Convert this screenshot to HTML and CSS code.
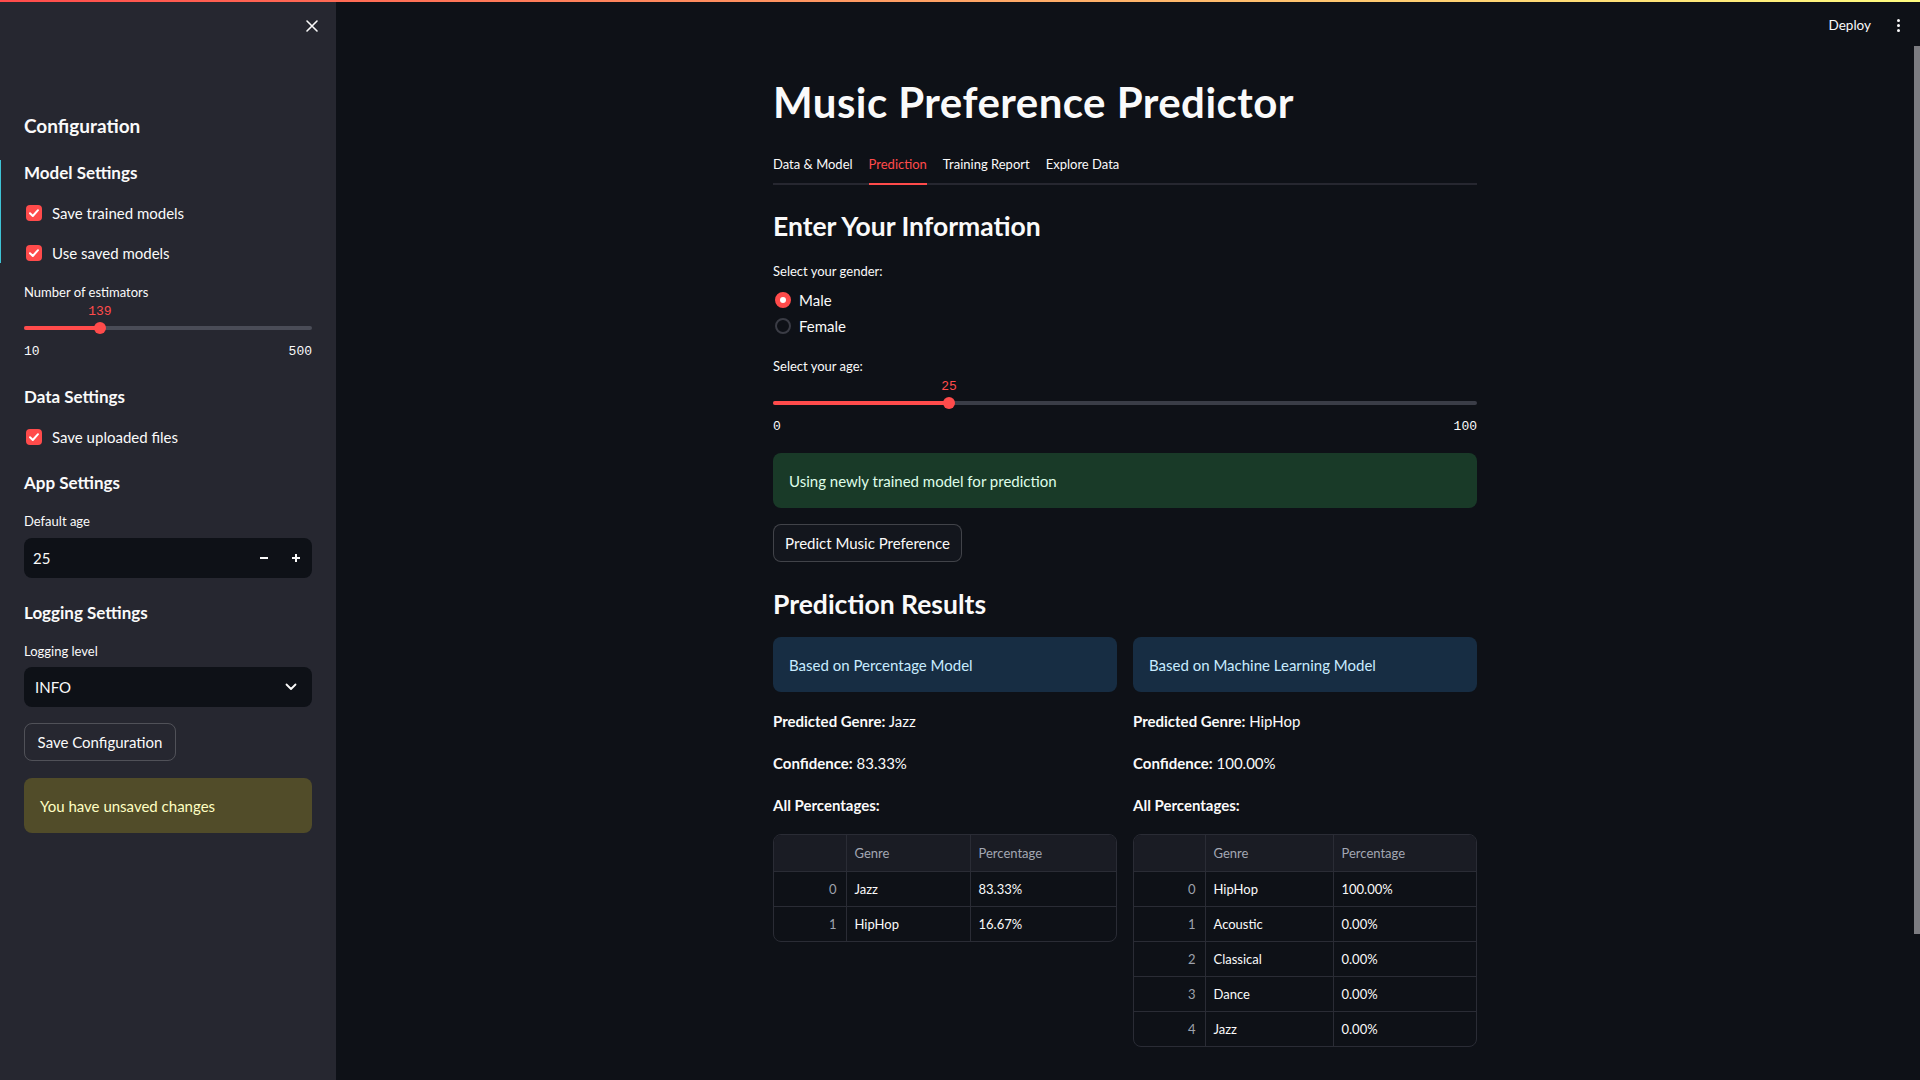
FILE: index.html
```html
<!DOCTYPE html>
<html lang="en">
<head>
<meta charset="utf-8">
<title>Music Preference Predictor</title>
<link rel="stylesheet" href="styles.css">
</head>
<body>
<div class="decoration"></div>
<div class="app">
  <aside class="sidebar">
    <div class="sb-edge"></div>
    <div class="sb-header">
      <button class="close-btn" aria-label="Close sidebar">
        <svg width="14" height="14" viewBox="0 0 14 14"><path d="M2 2 L12 12 M12 2 L2 12" stroke="#fafafa" stroke-width="1.6" stroke-linecap="round"/></svg>
      </button>
    </div>
    <div class="sb-content">
      <h2 class="sb-title">Configuration</h2>
      <h3 class="sb-sub sub-model">Model Settings</h3>
      <label class="checkbox cb-first"><span class="box"><svg width="12" height="12" viewBox="0 0 12 12"><path d="M2 6.2 L4.8 9 L10 3.2" fill="none" stroke="#fff" stroke-width="2" stroke-linecap="round" stroke-linejoin="round"/></svg></span><span>Save trained models</span></label>
      <label class="checkbox"><span class="box"><svg width="12" height="12" viewBox="0 0 12 12"><path d="M2 6.2 L4.8 9 L10 3.2" fill="none" stroke="#fff" stroke-width="2" stroke-linecap="round" stroke-linejoin="round"/></svg></span><span>Use saved models</span></label>
      <div class="widget-label lbl-est">Number of estimators</div>
      <div class="slider">
        <div class="slider-value-row"><span class="slider-value" style="left:26.33%">139</span></div>
        <div class="slider-track sb-track"><div class="rail"></div><div class="fill" style="width:26.33%"></div><div class="thumb" style="left:26.33%"></div></div>
        <div class="slider-ticks"><span>10</span><span>500</span></div>
      </div>
      <h3 class="sb-sub sub-data">Data Settings</h3>
      <label class="checkbox cb-data"><span class="box"><svg width="12" height="12" viewBox="0 0 12 12"><path d="M2 6.2 L4.8 9 L10 3.2" fill="none" stroke="#fff" stroke-width="2" stroke-linecap="round" stroke-linejoin="round"/></svg></span><span>Save uploaded files</span></label>
      <h3 class="sb-sub sub-app">App Settings</h3>
      <div class="widget-label lbl-age-default">Default age</div>
      <div class="number-input">
        <span class="num-value">25</span>
        <span class="step"><svg width="10" height="10" viewBox="0 0 10 10"><path d="M1 5 H9" stroke="#fafafa" stroke-width="2"/></svg></span>
        <span class="step"><svg width="10" height="10" viewBox="0 0 10 10"><path d="M1 5 H9 M5 1 V9" stroke="#fafafa" stroke-width="2"/></svg></span>
      </div>
      <h3 class="sb-sub sub-log">Logging Settings</h3>
      <div class="widget-label lbl-log">Logging level</div>
      <div class="select">
        <span>INFO</span>
        <svg width="12" height="8" viewBox="0 0 12 8"><path d="M1.5 1.5 L6 6 L10.5 1.5" fill="none" stroke="#fafafa" stroke-width="1.8" stroke-linecap="round" stroke-linejoin="round"/></svg>
      </div>
      <button class="btn btn-save">Save Configuration</button>
      <div class="alert warning">You have unsaved changes</div>
    </div>
  </aside>

  <main class="main">
    <div class="block">
      <h1 class="title">Music Preference Predictor</h1>
      <div class="tabs">
        <div class="tab">Data &amp; Model</div>
        <div class="tab active">Prediction</div>
        <div class="tab">Training Report</div>
        <div class="tab">Explore Data</div>
      </div>
      <h3 class="subheader sh-info">Enter Your Information</h3>
      <div class="widget-label lbl-gender">Select your gender:</div>
      <div class="radio-group">
        <div class="radio checked"><span class="dot"></span><span>Male</span></div>
        <div class="radio"><span class="dot"></span><span>Female</span></div>
      </div>
      <div class="widget-label lbl-age">Select your age:</div>
      <div class="slider main-slider">
        <div class="slider-value-row"><span class="slider-value" style="left:25%">25</span></div>
        <div class="slider-track main-track"><div class="rail"></div><div class="fill" style="width:25%"></div><div class="thumb" style="left:25%"></div></div>
        <div class="slider-ticks"><span>0</span><span>100</span></div>
      </div>
      <div class="alert success">Using newly trained model for prediction</div>
      <button class="btn btn-predict">Predict Music Preference</button>
      <h3 class="subheader sh-results">Prediction Results</h3>
      <div class="columns">
        <div class="col">
          <div class="alert info">Based on Percentage Model</div>
          <p class="line line-first"><b>Predicted Genre:</b> Jazz</p>
          <p class="line"><b>Confidence:</b> 83.33%</p>
          <p class="line"><b>All Percentages:</b></p>
          <div class="df">
            <table class="df1">
              <thead><tr><th class="idx"></th><th class="c-genre">Genre</th><th>Percentage</th></tr></thead>
              <tbody>
                <tr><td class="idx">0</td><td>Jazz</td><td>83.33%</td></tr>
                <tr><td class="idx">1</td><td>HipHop</td><td>16.67%</td></tr>
              </tbody>
            </table>
          </div>
        </div>
        <div class="col">
          <div class="alert info">Based on Machine Learning Model</div>
          <p class="line line-first"><b>Predicted Genre:</b> HipHop</p>
          <p class="line"><b>Confidence:</b> 100.00%</p>
          <p class="line"><b>All Percentages:</b></p>
          <div class="df">
            <table class="df2">
              <thead><tr><th class="idx"></th><th class="c-genre">Genre</th><th>Percentage</th></tr></thead>
              <tbody>
                <tr><td class="idx">0</td><td>HipHop</td><td>100.00%</td></tr>
                <tr><td class="idx">1</td><td>Acoustic</td><td>0.00%</td></tr>
                <tr><td class="idx">2</td><td>Classical</td><td>0.00%</td></tr>
                <tr><td class="idx">3</td><td>Dance</td><td>0.00%</td></tr>
                <tr><td class="idx">4</td><td>Jazz</td><td>0.00%</td></tr>
              </tbody>
            </table>
          </div>
        </div>
      </div>
    </div>
  </main>
</div>

<div class="top-actions">
  <span class="deploy">Deploy</span>
  <span class="menu-dots"><i></i><i></i><i></i></span>
</div>
<div class="scrollbar"></div>
</body>
</html>
```

FILE: styles.css
```css
* { box-sizing: border-box; margin: 0; padding: 0; }
html, body { height: 100%; }
body {
  background: #0e1117;
  color: #fafafa;
  font-family: Lato, "Liberation Sans", sans-serif;
  overflow: hidden;
  position: relative;
}

.decoration {
  position: absolute; top: 0; left: 0; right: 0; height: 2px;
  background: linear-gradient(90deg, #ff4b4b, #fffd80);
  z-index: 10;
}

.app { display: flex; height: 1080px; }

/* ---------- Sidebar ---------- */
.sidebar {
  width: 336px; flex: none;
  background: #262730;
  position: relative;
}
.sb-edge {
  position: absolute; left: 0; top: 160px; width: 1px; height: 103px;
  background: #3ec3d5;
}
.sb-header {
  height: 52px;
  display: flex; justify-content: flex-end; align-items: center;
  padding-right: 17px;
}
.close-btn {
  background: none; border: none; width: 14px; height: 14px;
  display: flex; align-items: center; justify-content: center;
}
.sb-content { padding: 0 24px; }

.sb-title {
  font-size: 19px; font-weight: 700; line-height: 28px;
  margin-top: 60px;
}
.sb-sub { font-size: 17px; font-weight: 700; line-height: 28px; }
.sub-model { margin-top: 19px; }
.sub-data { margin-top: 21px; }
.sub-app { margin-top: 12px; }
.sub-log { margin-top: 21px; }

.checkbox {
  display: flex; align-items: center; height: 40px;
  font-size: 15px;
}
.checkbox .box {
  width: 16px; height: 16px; border-radius: 4px;
  background: #ff4b4b;
  margin-left: 2px; margin-right: 10px;
  display: flex; align-items: center; justify-content: center;
}
.cb-first { margin-top: 6px; }
.cb-data { margin-top: 6px; }

.widget-label { font-size: 13px; line-height: 20px; }
.lbl-est { margin-top: 9px; }
.lbl-age-default { margin-top: 14px; }
.lbl-log { margin-top: 14px; }

/* slider */
.slider-value-row { height: 20px; position: relative; }
.slider-value {
  position: absolute; top: 0; transform: translateX(-50%);
  font-family: "Liberation Mono", "DejaVu Sans Mono", monospace;
  font-size: 13px; line-height: 20px; color: #ff4b4b;
}
.slider-track { height: 12px; position: relative; }
.slider-track .rail {
  position: absolute; left: 0; right: 0; top: 4px; height: 4px; border-radius: 2px;
  background: #3a3d47;
}
.sb-track .rail { background: #4a4c57; }
.slider-track .fill {
  position: absolute; left: 0; top: 4px; height: 4px; border-radius: 2px;
  background: #ff4b4b;
}
.slider-track .thumb {
  position: absolute; top: 0; width: 12px; height: 12px; border-radius: 50%;
  background: #ff4b4b; transform: translateX(-50%);
}
.slider-ticks {
  margin-top: 8px;
  display: flex; justify-content: space-between;
  font-family: "Liberation Mono", "DejaVu Sans Mono", monospace;
  font-size: 13px; line-height: 20px; color: #fafafa;
}

/* number input */
.number-input {
  margin-top: 7px;
  height: 40px; border-radius: 8px; background: #0e1117;
  display: flex; align-items: center;
  padding-left: 9px;
  font-size: 15px;
}
.num-value { flex: 1; }
.step {
  width: 32px; height: 40px;
  display: flex; align-items: center; justify-content: center;
}

/* select */
.select {
  margin-top: 6px;
  height: 40px; border-radius: 8px; background: #0e1117;
  display: flex; align-items: center; justify-content: space-between;
  padding: 0 15px 0 11px;
  font-size: 15px;
}

/* buttons */
.btn {
  font-family: inherit; color: #fafafa; font-size: 15px;
  background: transparent;
  border: 1px solid rgba(250, 250, 250, 0.2);
  border-radius: 8px;
  height: 38px; padding: 0 12px;
  display: block;
  white-space: nowrap;
}
.btn-save { margin-top: 16px; width: 152px; }
.btn-predict { margin-top: 16px; width: 189px; padding: 0; background: #13161d; }

/* alerts */
.alert {
  height: 55px; border-radius: 8px;
  display: flex; align-items: center;
  padding-left: 16px;
  font-size: 15px;
}
.warning { margin-top: 17px; background: #514c29; color: #ffffc2; }
.success { margin-top: 16px; background: #193a28; color: #dffde9; }
.info { background: #172d43; color: #c7ebff; }

/* ---------- Main ---------- */
.main {
  flex: 1;
  padding-right: 6px;
  display: flex; justify-content: center;
}
.block { width: 704px; padding-top: 74px; }

.title { font-size: 42px; font-weight: 700; line-height: 56px; letter-spacing: 0.45px; }

.tabs {
  margin-top: 16px;
  display: flex; gap: 16px;
  border-bottom: 2px solid #262730;
}
.tab {
  height: 39px;
  font-size: 13px; line-height: 36px; color: #fafafa;
  margin-bottom: -2px;
  border-bottom: 2px solid transparent;
}
.tab.active { color: #ff4b4b; border-bottom-color: #ff4b4b; }

.subheader { font-size: 26.5px; font-weight: 700; line-height: 36px; }
.sh-info { margin-top: 23px; }
.sh-results { margin-top: 24px; }

.lbl-gender { margin-top: 17px; }
.radio-group { margin-top: 6px; }
.radio { height: 26px; display: flex; align-items: center; font-size: 15px; }
.radio .dot {
  width: 16px; height: 16px; border-radius: 50%;
  margin-left: 2px; margin-right: 8px;
  border: 2px solid #3a3c45;
  position: relative;
}
.radio.checked .dot { background: #ff4b4b; border-color: #ff4b4b; }
.radio.checked .dot::after {
  content: ""; position: absolute; left: 3px; top: 3px;
  width: 6px; height: 6px; border-radius: 50%; background: #fff;
}
.lbl-age { margin-top: 17px; }
.main-slider { margin-top: 1px; }

.columns {
  margin-top: 15px;
  display: grid; grid-template-columns: 1fr 1fr; gap: 16px;
}
.line { font-size: 15px; line-height: 24px; margin-top: 18px; }
.line-first { margin-top: 17px; }
.line b { font-weight: 700; }

/* dataframe */
.df {
  margin-top: 17px;
  border: 1px solid #2a2c35;
  border-radius: 8px;
  overflow: hidden;
}
.df table { width: 100%; border-collapse: collapse; font-size: 13px; table-layout: fixed; }
.df th, .df td {
  text-align: left; padding: 0 8px;
  border-right: 1px solid #2a2c35;
  border-bottom: 1px solid #2a2c35;
}
.df th:last-child, .df td:last-child { border-right: none; }
.df tbody tr:last-child td { border-bottom: none; }
.df th { height: 36px; background: #1a1c24; color: #a3a7b3; font-weight: 400; }
.df td { height: 35px; color: #fafafa; }
.df .idx { text-align: right; padding-right: 9px; color: #9ea2ad; }
.df1 .idx { width: 72px; }
.df1 .c-genre { width: 124px; }
.df2 .idx { width: 71px; }
.df2 .c-genre { width: 128px; }

/* ---------- Overlays ---------- */
.top-actions {
  position: absolute; top: 0; right: 20px; height: 50px;
  display: flex; align-items: center; gap: 26px;
}
.deploy { font-size: 13.5px; color: #fafafa; }
.menu-dots { display: flex; flex-direction: column; gap: 2px; }
.menu-dots i { display: block; width: 3px; height: 3px; border-radius: 50%; background: #fafafa; }
.scrollbar {
  position: absolute; right: 0; top: 46px; width: 6px; height: 888px;
  background: #7c7c81;
}
```
